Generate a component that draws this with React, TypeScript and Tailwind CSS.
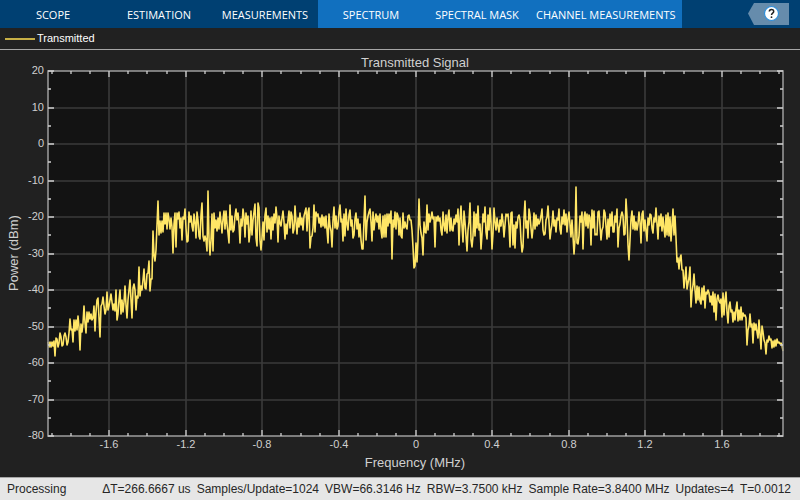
import clsx from 'clsx';

const tabs = [
    { label: 'SCOPE', active: false },
    { label: 'ESTIMATION', active: false },
    { label: 'MEASUREMENTS', active: false },
    { label: 'SPECTRUM', active: true },
    { label: 'SPECTRAL MASK', active: true },
    { label: 'CHANNEL MEASUREMENTS', active: true },
];

const stats = [
    'ΔT=266.6667 us',
    'Samples/Update=1024',
    'VBW=66.3146 Hz',
    'RBW=3.7500 kHz',
    'Sample Rate=3.8400 MHz',
    'Updates=4',
    'T=0.0012',
];

// Plot box, in the units of the chart's viewBox
const LEFT = 48;
const RIGHT = 783;
const TOP = 71;
const BOTTOM = 436;

const freqX = (mhz: number) => Math.round(415.5 + mhz * 191.5);
const powerY = (dbm: number) => Math.round(TOP + (20 - dbm) * 3.65);

const xTicks = [-1.6, -1.2, -0.8, -0.4, 0, 0.4, 0.8, 1.2, 1.6];
const yTicks = [20, 10, 0, -10, -20, -30, -40, -50, -60, -70, -80];
const xMinor = Array.from({ length: 39 }, (_, i) => (i - 19) / 10).filter((_, i) => (i - 19) % 4 !== 0);
const yMinor = Array.from({ length: 10 }, (_, i) => 15 - i * 10);

// Height of the trace at every unit from LEFT to RIGHT
const trace = [
    342, 347, 342, 347, 342, 346, 341, 356, 338, 339, 347, 343, 333, 337, 346, 345, 336, 333, 337, 345,
    342, 333, 319, 330, 329, 342, 320, 331, 320, 330, 316, 327, 350, 324, 332, 323, 306, 323, 333, 312,
    322, 312, 319, 314, 320, 318, 306, 331, 312, 300, 298, 318, 337, 306, 304, 297, 306, 314, 310, 292,
    310, 306, 300, 294, 302, 310, 304, 311, 290, 320, 314, 300, 290, 314, 300, 312, 302, 286, 305, 318,
    300, 290, 280, 300, 318, 288, 284, 290, 310, 296, 298, 267, 296, 286, 290, 280, 269, 288, 289, 274,
    273, 261, 291, 279, 279, 231, 255, 261, 250, 225, 201, 235, 221, 233, 221, 232, 213, 224, 213, 229,
    213, 219, 229, 218, 227, 253, 224, 213, 247, 213, 219, 212, 228, 218, 240, 217, 219, 209, 228, 242,
    241, 212, 222, 216, 226, 231, 214, 222, 238, 212, 220, 236, 239, 215, 203, 236, 241, 236, 240, 251,
    191, 238, 255, 240, 214, 251, 213, 228, 220, 231, 218, 229, 212, 222, 233, 219, 211, 229, 211, 224,
    233, 243, 205, 230, 216, 232, 230, 216, 209, 220, 213, 224, 243, 219, 226, 209, 217, 237, 213, 224,
    216, 242, 233, 211, 235, 220, 212, 204, 238, 246, 203, 208, 240, 250, 238, 222, 240, 215, 208, 232,
    216, 229, 218, 239, 217, 230, 214, 223, 207, 218, 242, 216, 223, 226, 218, 211, 222, 239, 224, 234,
    220, 211, 228, 212, 216, 233, 229, 206, 222, 234, 218, 227, 213, 225, 218, 230, 216, 212, 208, 231,
    212, 208, 248, 237, 236, 228, 205, 232, 212, 216, 214, 223, 218, 227, 215, 226, 217, 228, 216, 230,
    243, 214, 226, 231, 247, 220, 207, 228, 216, 229, 226, 212, 205, 222, 219, 241, 214, 236, 209, 224,
    230, 215, 210, 226, 220, 238, 235, 219, 213, 229, 219, 237, 224, 240, 249, 249, 220, 196, 240, 222,
    216, 212, 209, 222, 241, 212, 230, 220, 214, 222, 216, 229, 214, 230, 238, 216, 237, 215, 237, 214,
    226, 214, 223, 211, 259, 220, 227, 212, 229, 213, 216, 235, 218, 236, 238, 213, 228, 222, 227, 229,
    216, 215, 220, 220, 230, 247, 268, 266, 243, 262, 240, 199, 225, 233, 238, 255, 222, 232, 233, 205,
    230, 214, 222, 218, 212, 219, 217, 247, 217, 221, 216, 221, 218, 230, 235, 212, 225, 231, 215, 233,
    217, 210, 231, 218, 230, 231, 219, 224, 215, 222, 209, 245, 219, 206, 226, 242, 211, 222, 236, 251,
    230, 222, 203, 240, 247, 236, 212, 236, 214, 228, 206, 230, 224, 249, 234, 214, 222, 207, 232, 239,
    215, 230, 208, 222, 249, 233, 208, 222, 230, 218, 226, 232, 220, 226, 214, 222, 237, 225, 214, 216,
    214, 226, 247, 213, 212, 245, 225, 248, 222, 228, 217, 215, 220, 240, 252, 247, 218, 201, 228, 221,
    238, 209, 215, 228, 238, 228, 213, 229, 215, 226, 219, 224, 221, 216, 209, 230, 235, 234, 220, 217,
    206, 222, 239, 230, 224, 211, 226, 220, 232, 218, 220, 209, 229, 234, 217, 224, 210, 225, 214, 232,
    219, 212, 224, 237, 220, 236, 254, 240, 187, 243, 244, 236, 216, 222, 212, 249, 218, 212, 226, 214,
    228, 215, 218, 245, 210, 228, 211, 235, 234, 235, 212, 211, 226, 240, 230, 227, 210, 213, 226, 239,
    219, 237, 214, 226, 212, 232, 232, 216, 222, 209, 247, 228, 224, 216, 212, 216, 235, 234, 199, 216,
    245, 260, 240, 219, 211, 229, 216, 230, 222, 230, 224, 212, 222, 243, 214, 211, 231, 220, 231, 241,
    218, 225, 214, 215, 228, 233, 218, 222, 208, 224, 239, 216, 226, 214, 231, 217, 228, 237, 215, 235,
    213, 236, 217, 241, 226, 209, 235, 216, 238, 262, 258, 269, 258, 255, 270, 270, 288, 278, 267, 289,
    283, 278, 267, 307, 292, 285, 274, 290, 303, 286, 300, 287, 301, 304, 288, 300, 286, 308, 292, 294,
    290, 293, 302, 296, 305, 292, 312, 294, 320, 299, 295, 301, 303, 299, 317, 293, 315, 300, 292, 312,
    323, 306, 302, 312, 310, 322, 312, 320, 309, 302, 321, 310, 320, 307, 320, 313, 316, 315, 318, 345,
    330, 326, 314, 327, 324, 343, 323, 330, 324, 332, 338, 320, 334, 349, 326, 332, 340, 343, 354, 340,
    342, 336, 340, 339, 348, 341, 347, 340, 346, 339, 343, 342, 344, 343, 345, 351,
];

function Toolstrip() {
    return (
        <header className="flex h-7 shrink-0 items-center justify-between bg-[#004072] font-['Open_Sans',sans-serif]">
            <nav className="flex h-full">
                {tabs.map((tab) => (
                    <button
                        key={tab.label}
                        type="button"
                        className={clsx(
                            'h-full min-w-[106px] px-1.5 pt-0.5 text-[11px] leading-4 whitespace-nowrap text-white',
                            tab.active && 'bg-[#1170bf]'
                        )}
                    >
                        {tab.label}
                    </button>
                ))}
            </nav>
            <button type="button" aria-label="Help" className="mr-[11px]">
                <svg width="41" height="22" viewBox="0 0 41 22">
                    <path d="M0 10.5 6 0H41V22H6z" fill="#668cac" />
                    <circle cx="23.5" cy="10.5" r="7" fill="#fff" stroke="#2f8fdb" strokeWidth="1.2" />
                    <path
                        d="M21.3 8.6c0-2.900 4.400-2.900 4.400-.2 0 1.700-2.200 1.700-2.200 3.600"
                        fill="none"
                        stroke="#222"
                        strokeWidth="1.5"
                    />
                    <circle cx="23.5" cy="14.2" r="0.9" fill="#222" />
                </svg>
            </button>
        </header>
    );
}

function Legend() {
    return (
        <div className="flex h-[22px] shrink-0 items-center gap-0.5 border-b border-[#a6a6a6] pl-[5px] text-[11px] text-white">
            <span className="h-0.5 w-[30px] bg-[#c8b046]" />
            <span>Transmitted</span>
        </div>
    );
}

function SpectrumPlot() {
    const points = trace.map((y, i) => `${LEFT + i},${y}`).join(' ');

    return (
        <svg viewBox="0 50 800 427" className="min-h-0 w-full flex-1" role="img" aria-label="Transmitted Signal">
            <rect x={LEFT} y={TOP} width={RIGHT - LEFT} height={BOTTOM - TOP} fill="#131313" />

            {/* Grid */}
            <g stroke="#3b3b3b" strokeWidth="1.6">
                {xTicks.map((t) => (
                    <line key={t} x1={freqX(t)} x2={freqX(t)} y1={TOP} y2={BOTTOM} />
                ))}
                {yTicks.slice(1, -1).map((t) => (
                    <line key={t} x1={LEFT} x2={RIGHT} y1={powerY(t)} y2={powerY(t)} />
                ))}
            </g>

            <polyline points={points} fill="none" stroke="#ffe666" strokeWidth="1.6" strokeLinejoin="round" />

            {/* Frame and tick marks */}
            <rect x={LEFT} y={TOP} width={RIGHT - LEFT} height={BOTTOM - TOP} fill="none" stroke="#969696" strokeWidth="1.6" />
            <g stroke="#d0d0d0" strokeWidth="1.3">
                {xTicks.map((t) => (
                    <path key={t} d={`M${freqX(t)} ${TOP}v6M${freqX(t)} ${BOTTOM}v-6`} />
                ))}
                {xMinor.map((t) => (
                    <path key={t} d={`M${freqX(t)} ${TOP}v3M${freqX(t)} ${BOTTOM}v-3`} />
                ))}
                {yTicks.map((t) => (
                    <path key={t} d={`M${LEFT} ${powerY(t)}h6M${RIGHT} ${powerY(t)}h-6`} />
                ))}
                {yMinor.map((t) => (
                    <path key={t} d={`M${LEFT} ${powerY(t)}h3M${RIGHT} ${powerY(t)}h-3`} />
                ))}
            </g>

            <g fill="#d0d0d0" className="text-[11px]">
                {xTicks.map((t) => (
                    <text key={t} x={freqX(t)} y="448" textAnchor="middle">
                        {t}
                    </text>
                ))}
                {yTicks.map((t) => (
                    <text key={t} x="44" y={powerY(t) + 3} textAnchor="end">
                        {t}
                    </text>
                ))}
            </g>

            <g fill="#d0d0d0" textAnchor="middle" className="text-[13px]">
                <text x="415" y="67">
                    Transmitted Signal
                </text>
                <text x="415" y="467">
                    Frequency (MHz)
                </text>
                <text transform="translate(18 253) rotate(-90)">Power (dBm)</text>
            </g>
        </svg>
    );
}

function StatusBar() {
    return (
        <footer className="flex h-[23px] shrink-0 items-center justify-between border-t border-[#a6a6a6] bg-[#e6e6e6] pr-[9px] pl-[7px] text-[12px] text-[#262626]">
            <span>Processing</span>
            <div className="flex gap-1.5 whitespace-nowrap">
                {stats.map((stat) => (
                    <span key={stat}>{stat}</span>
                ))}
            </div>
        </footer>
    );
}

export default function App() {
    return (
        <div className="flex h-screen flex-col bg-[#212121] font-['Liberation_Sans',Arial,sans-serif]">
            <Toolstrip />
            <Legend />
            <SpectrumPlot />
            <StatusBar />
        </div>
    );
}
